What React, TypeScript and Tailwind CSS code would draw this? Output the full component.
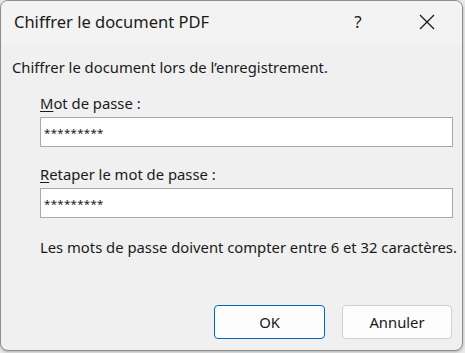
import React from 'react';

const font = { fontFamily: '"Noto Sans", "Open Sans", sans-serif' };

const PasswordField = ({ label, accessKey }: { label: string; accessKey: string }) => (
  <div className="flex flex-col">
    <label className="text-[14.8px] leading-[20px] text-[#1a1a1a] h-[20px]">
      <span className="underline underline-offset-2">{accessKey}</span>
      {label}
    </label>
    <div className="mt-[4px] h-[30px] w-[413px] border border-[#a8a8a8] bg-white flex items-center px-[3px]">
      <span className="text-[11.5px] tracking-[0.3px] text-[#1a1a1a] leading-none pt-[2px]">*********</span>
    </div>
  </div>
);

export default function App() {
  return (
    <div className="w-[465px] h-[353px] bg-[#e9e9e9] overflow-hidden" style={font}>
      <div className="w-[463px] h-[351px] rounded-[8px] border border-[#8c8c8c] bg-[#f0f0f0] shadow-[0_1px_3px_rgba(0,0,0,0.25)] flex flex-col overflow-hidden">
        {/* Title bar */}
        <div className="h-[44px] shrink-0 bg-[#f3f3f3] flex items-center pl-[13px]">
          <span className="text-[16.5px] text-[#1a1a1a] flex-1 -mt-[2px]">Chiffrer le document PDF</span>
          <span className="w-[40px] text-center text-[17px] text-[#1a1a1a] mr-[41px] -mt-[2px]">?</span>
          <svg width="16" height="16" viewBox="0 0 16 16" className="mr-[27px] -mt-[2px]">
            <path d="M1 1 L15 15 M15 1 L1 15" stroke="#1a1a1a" strokeWidth="1.3" />
          </svg>
        </div>

        {/* Body */}
        <div className="flex flex-col flex-1 pl-[11px]">
          <p className="text-[14.8px] leading-[20px] text-[#1a1a1a] mt-[12px]">
            Chiffrer le document lors de l’enregistrement.
          </p>

          <div className="pl-[28px] flex flex-col">
            <div className="mt-[16px]">
              <PasswordField accessKey="M" label="ot de passe :" />
            </div>
            <div className="mt-[17px]">
              <PasswordField accessKey="R" label="etaper le mot de passe :" />
            </div>
            <p className="mt-[19px] text-[14.8px] leading-[20px] text-[#1a1a1a]">
              Les mots de passe doivent compter entre 6 et 32 caractères.
            </p>
          </div>

          {/* Buttons */}
          <div className="mt-auto mb-[11px] flex justify-end gap-[17px] pr-[10px]">
            <button className="w-[111px] h-[34px] rounded-[4px] border border-[#0067c0] bg-[#fdfdfd] text-[14.8px] text-[#1a1a1a]">
              OK
            </button>
            <button className="w-[110px] h-[34px] rounded-[4px] border border-[#d0d0d0] bg-[#fdfdfd] text-[14.8px] text-[#1a1a1a]">
              Annuler
            </button>
          </div>
        </div>
      </div>
    </div>
  );
}
